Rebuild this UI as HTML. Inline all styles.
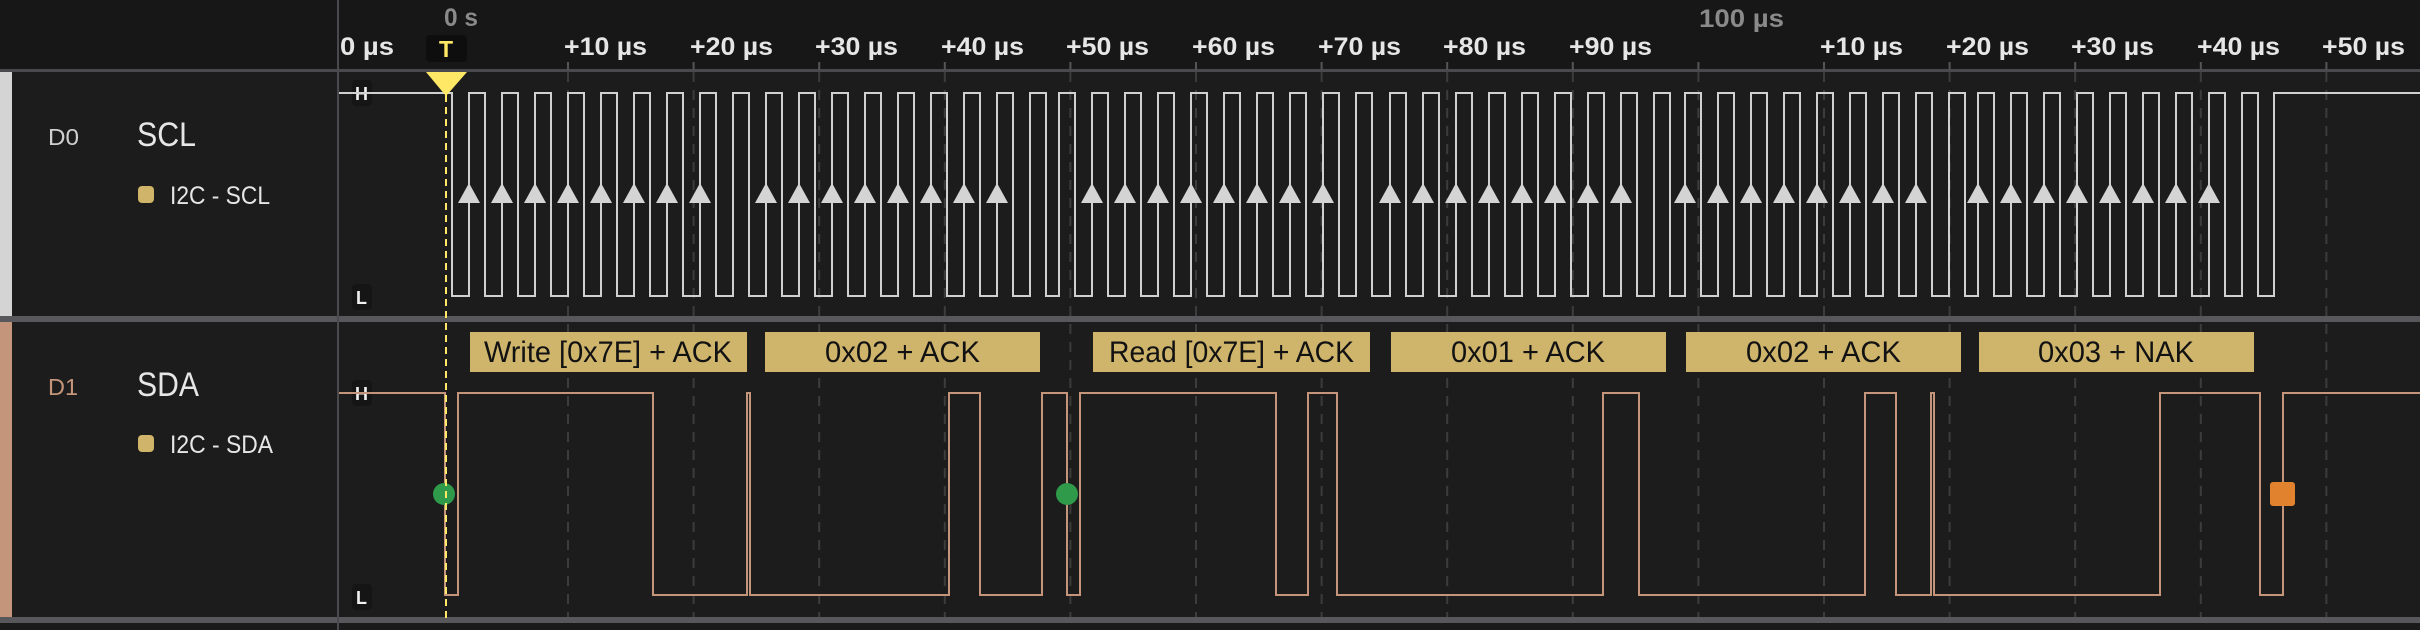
<!DOCTYPE html>
<html><head><meta charset="utf-8"><style>
html,body{margin:0;padding:0;background:#1c1c1c;}
body{width:2420px;height:630px;overflow:hidden;position:relative;font-family:"Liberation Sans",sans-serif;}
svg{position:absolute;left:0;top:0}
.t{font-family:"Liberation Sans",sans-serif;}
</style></head><body>
<svg width="2420" height="630" viewBox="0 0 2420 630" xmlns="http://www.w3.org/2000/svg">
<rect x="0" y="0" width="2420" height="630" fill="#1c1c1c"/>
<rect x="0" y="0" width="2420" height="70" fill="#171717"/>
<rect x="0" y="69" width="2420" height="3" fill="#4a4a4e"/>
<rect x="0" y="316" width="2420" height="6" fill="#58585c"/>
<rect x="0" y="617" width="2420" height="6" fill="#58585c"/>
<rect x="0" y="623" width="2420" height="7" fill="#1a1a1a"/>
<rect x="337" y="0" width="2" height="630" fill="#4a4a4e"/>
<rect x="0" y="72" width="12" height="244" fill="#d4d4d4"/>
<rect x="0" y="322" width="12" height="295" fill="#c4957a"/>
<g stroke="#3c3c3e" stroke-width="2" stroke-dasharray="10,8">
<line x1="568" y1="72" x2="568" y2="617"/><line x1="693.6" y1="72" x2="693.6" y2="617"/><line x1="819.2" y1="72" x2="819.2" y2="617"/><line x1="944.8" y1="72" x2="944.8" y2="617"/><line x1="1070.4" y1="72" x2="1070.4" y2="617"/><line x1="1196" y1="72" x2="1196" y2="617"/><line x1="1321.6" y1="72" x2="1321.6" y2="617"/><line x1="1447.2" y1="72" x2="1447.2" y2="617"/><line x1="1572.8" y1="72" x2="1572.8" y2="617"/><line x1="1698.4" y1="72" x2="1698.4" y2="617"/><line x1="1824" y1="72" x2="1824" y2="617"/><line x1="1949.6" y1="72" x2="1949.6" y2="617"/><line x1="2075.2" y1="72" x2="2075.2" y2="617"/><line x1="2200.8" y1="72" x2="2200.8" y2="617"/><line x1="2326.4" y1="72" x2="2326.4" y2="617"/>
</g>
<g stroke="#555" stroke-width="2">
<line x1="568" y1="62" x2="568" y2="70"/><line x1="693.6" y1="62" x2="693.6" y2="70"/><line x1="819.2" y1="62" x2="819.2" y2="70"/><line x1="944.8" y1="62" x2="944.8" y2="70"/><line x1="1070.4" y1="62" x2="1070.4" y2="70"/><line x1="1196" y1="62" x2="1196" y2="70"/><line x1="1321.6" y1="62" x2="1321.6" y2="70"/><line x1="1447.2" y1="62" x2="1447.2" y2="70"/><line x1="1572.8" y1="62" x2="1572.8" y2="70"/><line x1="1698.4" y1="62" x2="1698.4" y2="70"/><line x1="1824" y1="62" x2="1824" y2="70"/><line x1="1949.6" y1="62" x2="1949.6" y2="70"/><line x1="2075.2" y1="62" x2="2075.2" y2="70"/><line x1="2200.8" y1="62" x2="2200.8" y2="70"/><line x1="2326.4" y1="62" x2="2326.4" y2="70"/>
</g>
<g class="t" font-weight="bold" font-size="25" fill="#8a8a8a" lengthAdjust="spacingAndGlyphs">
<text x="444" y="26" textLength="34" lengthAdjust="spacingAndGlyphs">0 s</text><text x="1699" y="27" textLength="85" lengthAdjust="spacingAndGlyphs">100 µs</text>
</g>
<g class="t" font-weight="bold" font-size="25" fill="#e6e6e6">
<text x="340" y="55" textLength="54" lengthAdjust="spacingAndGlyphs">0 µs</text>
<text x="564" y="55" textLength="83" lengthAdjust="spacingAndGlyphs">+10 µs</text><text x="690" y="55" textLength="83" lengthAdjust="spacingAndGlyphs">+20 µs</text><text x="815" y="55" textLength="83" lengthAdjust="spacingAndGlyphs">+30 µs</text><text x="941" y="55" textLength="83" lengthAdjust="spacingAndGlyphs">+40 µs</text><text x="1066" y="55" textLength="83" lengthAdjust="spacingAndGlyphs">+50 µs</text><text x="1192" y="55" textLength="83" lengthAdjust="spacingAndGlyphs">+60 µs</text><text x="1318" y="55" textLength="83" lengthAdjust="spacingAndGlyphs">+70 µs</text><text x="1443" y="55" textLength="83" lengthAdjust="spacingAndGlyphs">+80 µs</text><text x="1569" y="55" textLength="83" lengthAdjust="spacingAndGlyphs">+90 µs</text>
<text x="1820" y="55" textLength="83" lengthAdjust="spacingAndGlyphs">+10 µs</text><text x="1946" y="55" textLength="83" lengthAdjust="spacingAndGlyphs">+20 µs</text><text x="2071" y="55" textLength="83" lengthAdjust="spacingAndGlyphs">+30 µs</text><text x="2197" y="55" textLength="83" lengthAdjust="spacingAndGlyphs">+40 µs</text><text x="2322" y="55" textLength="83" lengthAdjust="spacingAndGlyphs">+50 µs</text>
</g>
<g class="t">
<text x="48" y="145" font-size="23" fill="#cfcfcf" textLength="31" lengthAdjust="spacingAndGlyphs">D0</text>
<text x="137" y="146" font-size="34" fill="#e6e6e6" textLength="59" lengthAdjust="spacingAndGlyphs">SCL</text>
<rect x="138" y="186" width="16" height="17" rx="4" fill="#cfb46a"/>
<text x="170" y="204" font-size="25" fill="#e6e6e6" textLength="100" lengthAdjust="spacingAndGlyphs">I2C - SCL</text>
<text x="48" y="395" font-size="23" fill="#c4957a" textLength="30" lengthAdjust="spacingAndGlyphs">D1</text>
<text x="137" y="396" font-size="34" fill="#e6e6e6" textLength="62" lengthAdjust="spacingAndGlyphs">SDA</text>
<rect x="138" y="435" width="16" height="17" rx="4" fill="#cfb46a"/>
<text x="170" y="453" font-size="25" fill="#e6e6e6" textLength="103" lengthAdjust="spacingAndGlyphs">I2C - SDA</text>
</g>
<g class="t" font-weight="bold" font-size="18" fill="#f0f0f0">
<rect x="352" y="80" width="20" height="26" rx="4" fill="#151515"/><text x="355" y="100">H</text>
<rect x="352" y="284" width="20" height="26" rx="4" fill="#151515"/><text x="356" y="304">L</text>
<rect x="352" y="380" width="20" height="26" rx="4" fill="#151515"/><text x="355" y="400">H</text>
<rect x="352" y="584" width="20" height="26" rx="4" fill="#151515"/><text x="356" y="604">L</text>
</g>
<path fill="none" stroke="#d0d0d0" stroke-width="2" d="M339 93 H452 V296
H469 V93 H485 V296 H502 V93 H518 V296 H535 V93 H551 V296 H568 V93 H584 V296 H601 V93 H617 V296 H634 V93 H650 V296 H667 V93 H683 V296 H700 V93 H716 V296 H733 V93 H749 V296
H766 V93 H782 V296 H799 V93 H815 V296 H832 V93 H848 V296 H865 V93 H881 V296 H898 V93 H914 V296 H931 V93 H947 V296 H964 V93 H980 V296 H997 V93 H1013 V296 H1030 V93 H1046 V296
H1059 V93 H1075 V296
H1092 V93 H1108 V296 H1125 V93 H1141 V296 H1158 V93 H1174 V296 H1191 V93 H1207 V296 H1224 V93 H1240 V296 H1257 V93 H1273 V296 H1290 V93 H1306 V296 H1323 V93 H1339 V296 H1356 V93 H1372 V296
H1390 V93 H1406 V296 H1423 V93 H1439 V296 H1456 V93 H1472 V296 H1489 V93 H1505 V296 H1522 V93 H1538 V296 H1555 V93 H1571 V296 H1588 V93 H1604 V296 H1621 V93 H1637 V296 H1654 V93 H1670 V296
H1685 V93 H1701 V296 H1718 V93 H1734 V296 H1751 V93 H1767 V296 H1784 V93 H1800 V296 H1817 V93 H1833 V296 H1850 V93 H1866 V296 H1883 V93 H1899 V296 H1916 V93 H1932 V296 H1949 V93 H1965 V296
H1978 V93 H1994 V296 H2011 V93 H2027 V296 H2044 V93 H2060 V296 H2077 V93 H2093 V296 H2110 V93 H2126 V296 H2143 V93 H2159 V296 H2176 V93 H2192 V296 H2209 V93 H2225 V296 H2242 V93 H2258 V296
H2274 V93 H2420"/>
<g fill="#d4d4d4">
<path d="M469 183 l11 20 h-22z M502 183 l11 20 h-22z M535 183 l11 20 h-22z M568 183 l11 20 h-22z M601 183 l11 20 h-22z M634 183 l11 20 h-22z M667 183 l11 20 h-22z M700 183 l11 20 h-22z
M766 183 l11 20 h-22z M799 183 l11 20 h-22z M832 183 l11 20 h-22z M865 183 l11 20 h-22z M898 183 l11 20 h-22z M931 183 l11 20 h-22z M964 183 l11 20 h-22z M997 183 l11 20 h-22z
M1092 183 l11 20 h-22z M1125 183 l11 20 h-22z M1158 183 l11 20 h-22z M1191 183 l11 20 h-22z M1224 183 l11 20 h-22z M1257 183 l11 20 h-22z M1290 183 l11 20 h-22z M1323 183 l11 20 h-22z
M1390 183 l11 20 h-22z M1423 183 l11 20 h-22z M1456 183 l11 20 h-22z M1489 183 l11 20 h-22z M1522 183 l11 20 h-22z M1555 183 l11 20 h-22z M1588 183 l11 20 h-22z M1621 183 l11 20 h-22z
M1685 183 l11 20 h-22z M1718 183 l11 20 h-22z M1751 183 l11 20 h-22z M1784 183 l11 20 h-22z M1817 183 l11 20 h-22z M1850 183 l11 20 h-22z M1883 183 l11 20 h-22z M1916 183 l11 20 h-22z
M1978 183 l11 20 h-22z M2011 183 l11 20 h-22z M2044 183 l11 20 h-22z M2077 183 l11 20 h-22z M2110 183 l11 20 h-22z M2143 183 l11 20 h-22z M2176 183 l11 20 h-22z M2209 183 l11 20 h-22z"/>
</g>
<path fill="none" stroke="#c4957a" stroke-width="2" d="M339 393 H445 V595 H458 V393 H653 V595 H747 V393 H750 V595 H949 V393 H980 V595 H1042 V393 H1067 V595 H1080 V393 H1276 V595 H1308 V393 H1337 V595 H1603 V393 H1639 V595 H1865 V393 H1896 V595 H1931 V393 H1934 V595 H2160 V393 H2260 V595 H2283 V393 H2420"/>
<g fill="#cfb56c">
<rect x="470" y="332" width="277" height="40"/>
<rect x="765" y="332" width="275" height="40"/>
<rect x="1093" y="332" width="277" height="40"/>
<rect x="1391" y="332" width="275" height="40"/>
<rect x="1686" y="332" width="275" height="40"/>
<rect x="1979" y="332" width="275" height="40"/>
</g>
<g class="t" font-size="30" fill="#121212">
<text x="484" y="362" textLength="248" lengthAdjust="spacingAndGlyphs">Write [0x7E] + ACK</text>
<text x="825" y="362" textLength="155" lengthAdjust="spacingAndGlyphs">0x02 + ACK</text>
<text x="1109" y="362" textLength="245" lengthAdjust="spacingAndGlyphs">Read [0x7E] + ACK</text>
<text x="1451" y="362" textLength="154" lengthAdjust="spacingAndGlyphs">0x01 + ACK</text>
<text x="1746" y="362" textLength="155" lengthAdjust="spacingAndGlyphs">0x02 + ACK</text>
<text x="2038" y="362" textLength="156" lengthAdjust="spacingAndGlyphs">0x03 + NAK</text>
</g>
<ellipse cx="444" cy="494" rx="11" ry="11" fill="#2e9a4a"/>
<ellipse cx="1067" cy="494" rx="11" ry="11" fill="#2e9a4a"/>
<rect x="2270" y="482" width="25" height="24" rx="3" fill="#e0822e"/>
<line x1="446" y1="95" x2="446" y2="623" stroke="#ffe866" stroke-width="2" stroke-dasharray="7,5"/>
<rect x="426" y="35" width="41" height="27" rx="4" fill="#0e0e0e"/>
<text class="t" x="446" y="57" font-size="23" font-weight="bold" fill="#ffe866" text-anchor="middle">T</text>
<path d="M426 72 H467 L446 96 Z" fill="#ffe866"/>
</svg>
</body></html>
